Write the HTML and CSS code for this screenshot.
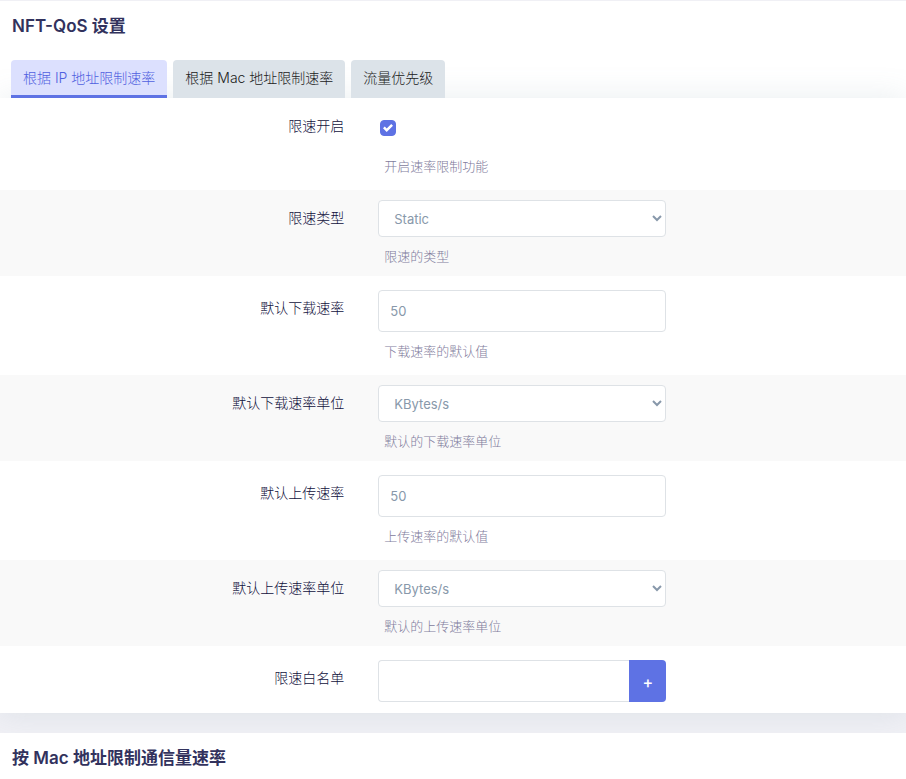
FILE: index.html
```html
<!DOCTYPE html>
<html lang="zh-CN">
<head>
  <meta charset="UTF-8" />
  <meta name="viewport" content="width=device-width, initial-scale=1.0"/>
  <title>NFT-QoS 设置</title>
  <link rel="stylesheet" href="styles.css">
</head>
<body>

<form class="section">
  <h3>NFT-QoS 设置</h3>

  <nav class="tabs">
    <a href="#ip" class="tab active">根据 IP 地址限制速率</a>
    <a href="#mac" class="tab">根据 Mac 地址限制速率</a>
    <a href="#priority" class="tab">流量优先级</a>
  </nav>

  <div class="panel" id="ip">
    <div class="row row-check">
      <label class="title" for="enable">限速开启</label>
      <div class="field">
        <div class="check-wrap">
          <input type="checkbox" class="check" id="enable" checked>
        </div>
        <div class="hint">开启速率限制功能</div>
      </div>
    </div>

    <div class="row row-select">
      <label class="title" for="type">限速类型</label>
      <div class="field">
        <select class="box" id="type">
          <option>Static</option>
          <option>Dynamic</option>
        </select>
        <div class="hint">限速的类型</div>
      </div>
    </div>

    <div class="row">
      <label class="title" for="download">默认下载速率</label>
      <div class="field">
        <input type="text" class="box" id="download" value="50">
        <div class="hint">下载速率的默认值</div>
      </div>
    </div>

    <div class="row row-select">
      <label class="title" for="download-unit">默认下载速率单位</label>
      <div class="field">
        <select class="box" id="download-unit">
          <option>KBytes/s</option>
          <option>MBytes/s</option>
        </select>
        <div class="hint">默认的下载速率单位</div>
      </div>
    </div>

    <div class="row">
      <label class="title" for="upload">默认上传速率</label>
      <div class="field">
        <input type="text" class="box" id="upload" value="50">
        <div class="hint">上传速率的默认值</div>
      </div>
    </div>

    <div class="row row-select">
      <label class="title" for="upload-unit">默认上传速率单位</label>
      <div class="field">
        <select class="box" id="upload-unit">
          <option>KBytes/s</option>
          <option>MBytes/s</option>
        </select>
        <div class="hint">默认的上传速率单位</div>
      </div>
    </div>

    <div class="row row-last">
      <label class="title" for="whitelist">限速白名单</label>
      <div class="field add-list">
        <input type="text" class="box" id="whitelist">
        <button type="button" class="add">+</button>
      </div>
    </div>
  </div>
</form>

<section class="section">
  <h3>按 Mac 地址限制通信量速率</h3>
</section>

</body>
</html>
```

FILE: styles.css
```css
* {
  box-sizing: border-box;
}
body {
  margin: 0;
  padding-top: 1px;
  min-height: 100vh;
  display: flex;
  flex-direction: column;
  gap: 20px;
  background: #f0f0f5;
  color: #32325d;
  font-family: Inter, "Noto Sans CJK SC", sans-serif;
  font-size: 14px;
  line-height: 20px;
}
.section {
  background: white;
}
.section:last-child {
  flex: 1;
  position: relative;
}
h3 {
  margin: 0;
  padding: 12px;
  font-size: 17px;
  font-weight: 600;
  line-height: 26px;
}
.tabs {
  position: relative;
  z-index: 1;
  display: flex;
  gap: 6px;
  margin-top: 9px;
  padding-left: 11px;
}
.tab {
  height: 38px;
  padding: 8px 12px;
  border-radius: 4px 4px 0 0;
  background: #dce3e9;
  color: #202020;
  font-weight: 300;
  text-decoration: none;
}
.tab.active {
  background: #dce0fe;
  border-bottom: 3px solid #5e72e4;
  color: #5060e0;
}
.panel {
  background: white;
  box-shadow: 0 0 30px rgba(120, 150, 160, 0.17);
}
.row {
  display: flex;
  padding: 14px 0;
}
.row:nth-child(even) {
  background: #f9f9f9;
}
.row-select {
  padding: 10px 0;
}
.row-check {
  padding-top: 10px;
}
.row-last {
  padding-bottom: 11px;
}
.title {
  width: 38%;
  padding-top: 8px;
  color: #10103c;
  font-weight: 300;
  text-align: right;
}
.field {
  width: 288px;
  margin-left: 34px;
}
.box {
  display: block;
  width: 100%;
  height: 42px;
  padding: 8px 11px;
  border: 1px solid #dee2e6;
  border-radius: 4px;
  background: white;
  color: #8898aa;
  font: inherit;
  font-size: 13px;
}
select.box {
  height: 37px;
}
.check-wrap {
  display: flex;
  padding: 12px 2px 11px;
}
.check {
  appearance: none;
  width: 16px;
  height: 16px;
  margin: 0;
  border: 1px solid #dee2e6;
  border-radius: 4px;
}
.check:checked {
  border-color: #5e72e4;
  background: #5e72e4 url("data:image/svg+xml,%3Csvg xmlns='http://www.w3.org/2000/svg' viewBox='0 0 8 8'%3E%3Cpath fill='%23fff' d='M6.564.75l-3.59 3.612-1.538-1.55L0 4.26 2.974 7.25 8 2.193z'/%3E%3C/svg%3E") center / 10px no-repeat;
}
.hint {
  margin-top: 9px;
  padding-left: 6px;
  color: #7f7c9c;
  font-size: 13px;
  font-weight: 300;
}
.add-list {
  display: flex;
}
.add-list .box {
  flex: 1;
  min-width: 0;
  border-right: none;
  border-radius: 4px 0 0 4px;
}
.add {
  width: 37px;
  padding: 2px 0 0;
  border: none;
  border-radius: 0 4px 4px 0;
  background: #5e72e4;
  color: white;
  font: inherit;
  font-size: 16px;
  font-weight: 500;
  cursor: pointer;
}
```
